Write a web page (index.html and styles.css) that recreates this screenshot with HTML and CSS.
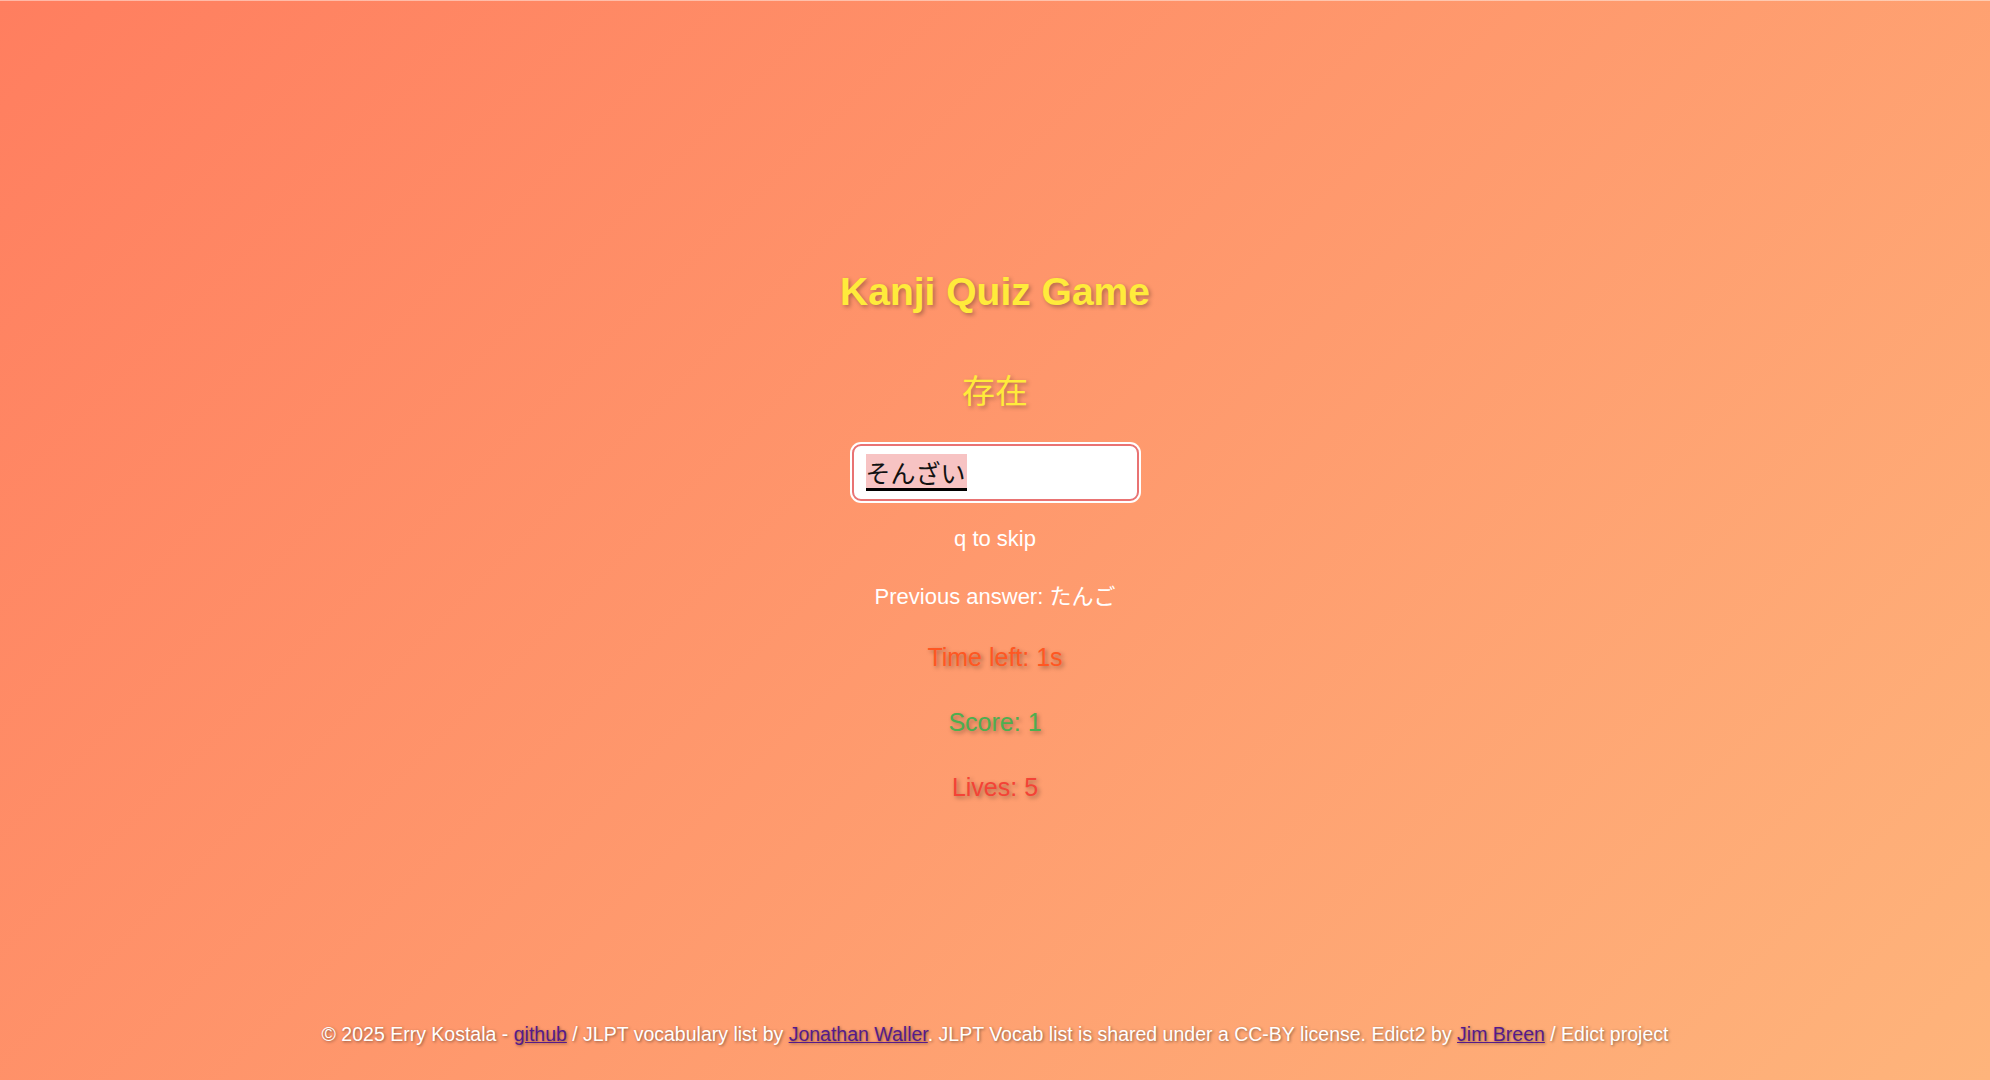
FILE: index.html
```html
<!DOCTYPE html>
<html lang="ja">
<head>
<meta charset="utf-8">
<title>Kanji Quiz Game</title>
<link rel="stylesheet" href="styles.css">
</head>
<body>
<main class="game">
  <h1 class="title">Kanji Quiz Game</h1>
  <div class="kanji">存在</div>
  <div class="answer-box"><span class="composing">そんざい</span></div>
  <p class="hint">q to skip</p>
  <p class="previous">Previous answer: たんご</p>
  <p class="stat time">Time left: 1s</p>
  <p class="stat score">Score: 1</p>
  <p class="stat lives">Lives: 5</p>
</main>
<footer class="footer">
  © 2025 Erry Kostala - <a href="#">github</a> / JLPT vocabulary list by <a href="#">Jonathan Waller</a>. JLPT Vocab list is shared under a CC-BY license. Edict2 by <a href="#">Jim Breen</a> / Edict project
</footer>
</body>
</html>
```

FILE: styles.css
```css
* { box-sizing: border-box; }
html, body { height: 100%; }
body {
  margin: 0;
  min-height: 100vh;
  display: flex;
  flex-direction: column;
  background: linear-gradient(135deg, #ff7e5f 0%, #feb47b 100%);
  border-top: 1px solid rgba(255,255,255,0.45);
  font-family: "Liberation Sans", Arial, "Noto Sans CJK JP", sans-serif;
  color: #ffffff;
}
.game {
  flex: 1;
  display: flex;
  flex-direction: column;
  align-items: center;
  justify-content: center;
  padding-top: 46px;
}
.title {
  margin: 0;
  font-size: 39px;
  line-height: 46px;
  font-weight: bold;
  color: #ffeb3b;
  text-shadow: 2px 2px 4px rgba(0,0,0,0.3);
}
.kanji {
  margin-top: 54px;
  font-family: "Noto Sans CJK JP", sans-serif;
  font-size: 33px;
  line-height: 40px;
  color: #ffeb3b;
  text-shadow: 2px 2px 4px rgba(0,0,0,0.3);
}
.answer-box {
  margin-top: 35px;
  width: 287px;
  height: 57px;
  border: 2px solid #e97373;
  box-shadow: 0 0 0 2px #ffffff;
  border-radius: 9px;
  background: #ffffff;
  padding: 0 0 0 12px;
  display: flex;
  align-items: center;
}
.composing {
  font-family: "Noto Sans CJK JP", sans-serif;
  font-size: 25px;
  line-height: 37px;
  height: 37px;
  color: #111;
  background: #f7c3c3;
  border-bottom: 3px solid #000;
  display: inline-block;
  padding-right: 1px;
}
.hint, .previous {
  margin: 0;
  font-size: 22px;
  line-height: 26px;
}
.hint { margin-top: 25px; }
.previous { margin-top: 32px; }
.stat {
  margin: 0;
  font-size: 25px;
  line-height: 28px;
  text-shadow: 2px 2px 4px rgba(0,0,0,0.35);
}
.time { margin-top: 33px; color: #ff5722; }
.score { margin-top: 37px; color: #4caf50; }
.lives { margin-top: 37px; color: #f44336; }
.footer {
  text-align: center;
  font-size: 19.5px;
  line-height: 22px;
  padding: 0 0 35px;
  color: #ffffff;
  text-shadow: 1px 1px 3px rgba(0,0,0,0.45);
}
.footer a { color: #551a8b; }
```
